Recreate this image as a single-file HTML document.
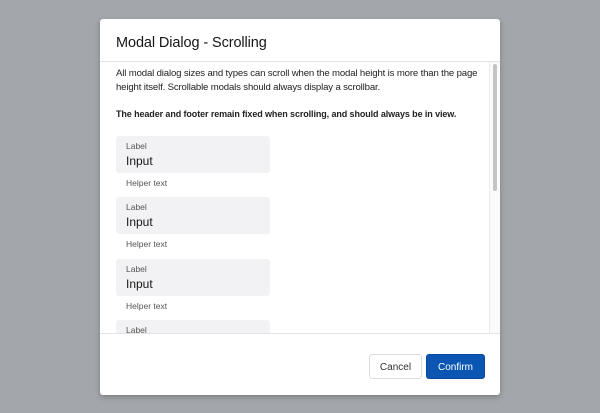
<!DOCTYPE html>
<html><head><style>
*{margin:0;padding:0;box-sizing:border-box}
body{width:600px;height:413px;background:#a3a6aa;font-family:"Liberation Sans",sans-serif;position:relative;overflow:hidden}
.m{position:absolute;left:100px;top:19px;width:400px;height:376px;background:#fff;border-radius:3px;box-shadow:0 2px 6px rgba(0,0,0,.25)}
.h{position:absolute;left:0;top:0;width:400px;height:43px;border-bottom:1px solid #e3e4e6}
.h div{position:absolute;left:16px;top:16px;font-size:14.5px;color:#161616;letter-spacing:-0.1px}
.b{position:absolute;left:0;top:43px;width:400px;height:272px;overflow:hidden;border-bottom:1px solid #e3e4e6}
.p{position:absolute;left:16px;font-size:9.6px;color:#222;line-height:14px;width:380px;white-space:nowrap;letter-spacing:-0.15px}
.f{position:absolute;left:16px;width:154px;height:37px;background:#f2f2f4;border-radius:3px}
.f .l{position:absolute;left:10px;top:5px;font-size:8.5px;color:#555}
.f .i{position:absolute;left:10px;top:18px;font-size:12px;color:#161616}
.ht{position:absolute;left:26px;font-size:8.5px;color:#555}
.sb{position:absolute;left:389px;top:0;width:11px;height:272px;background:#fafafa;border-left:1px solid #ececec}
.th{position:absolute;left:393px;top:2px;width:4px;height:127px;background:#c4c4c4;border-radius:2px}
.btn{position:absolute;top:335px;height:25px;border-radius:3px;font-size:10px;display:flex;align-items:center;justify-content:center;padding-top:2px}
</style></head><body>
<div class="m">
<div class="h"><div>Modal Dialog - Scrolling</div></div>
<div class="b">
<div class="p" style="top:5px">All modal dialog sizes and types can scroll when the modal height is more than the page<br>height itself. Scrollable modals should always display a scrollbar.</div>
<div class="p" style="top:45px;font-weight:bold;font-size:9px;letter-spacing:-0.1px">The header and footer remain fixed when scrolling, and should always be in view.</div>
<div class="f" style="top:74px"><div class="l">Label</div><div class="i">Input</div></div>
<div class="ht" style="top:116px">Helper text</div>
<div class="f" style="top:135px"><div class="l">Label</div><div class="i">Input</div></div>
<div class="ht" style="top:177px">Helper text</div>
<div class="f" style="top:197px"><div class="l">Label</div><div class="i">Input</div></div>
<div class="ht" style="top:239px">Helper text</div>
<div class="f" style="top:258px"><div class="l">Label</div><div class="i">Input</div></div>
<div class="sb"></div><div class="th"></div>
</div>
<div class="btn" style="left:269px;width:53px;border:1px solid #dcdcdc;color:#333">Cancel</div>
<div class="btn" style="left:326px;width:59px;background:#0b56b3;color:#fff;border:1px solid #0a4a9c">Confirm</div>
</div>
</body></html>
